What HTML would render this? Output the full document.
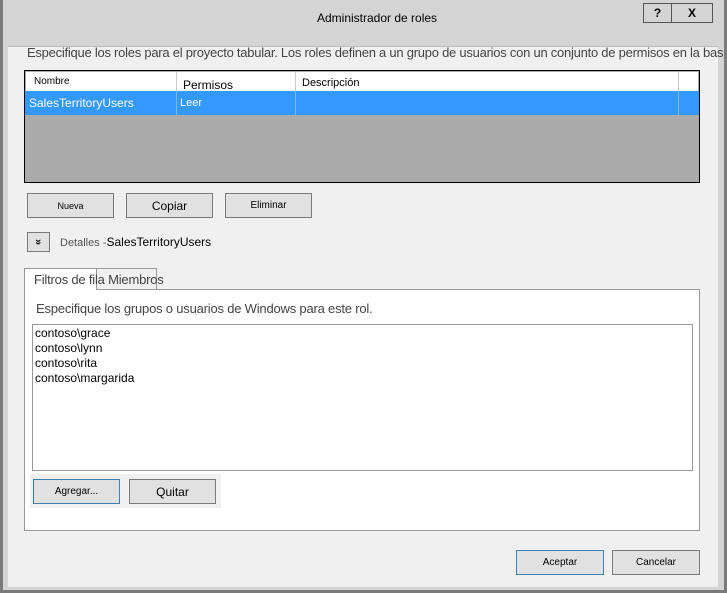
<!DOCTYPE html>
<html><head><meta charset="utf-8"><style>
*{margin:0;padding:0;box-sizing:border-box}
body{width:727px;height:593px;background:#7a7a7a;position:relative;overflow:hidden;font-family:"Liberation Sans",sans-serif;color:#000}
.a{position:absolute}
.btn{position:absolute;background:#e1e1e1;border:1px solid #7a7a7a;font-size:10px;text-align:center;display:flex;align-items:center;justify-content:center}
.t{position:absolute;white-space:nowrap}
</style></head><body>
<div class="a" style="left:3px;top:0;width:721px;height:590px;background:#d4d4d4"></div>
<div class="a" style="left:8px;top:46px;width:710px;height:541px;background:#f0f0f0;border-top:1px solid #bbb"></div>
<div class="a" style="left:643px;top:3px;width:28px;height:20px;border:1px solid #555;border-right:none;font-size:12px;font-weight:bold;text-align:center;line-height:18px">?</div>
<div class="a" style="left:671px;top:3px;width:42px;height:20px;border:1px solid #555;font-size:12px;font-weight:bold;text-align:center;line-height:18px">X</div>
<div class="t" style="left:317px;top:11px;font-size:12px">Administrador de roles</div>
<div class="t" style="left:27px;top:45px;font-size:13px;color:#444;letter-spacing:-0.25px">Especifique los roles para el proyecto tabular. Los roles definen a un grupo de usuarios con un conjunto de permisos en la bas</div>
<div class="a" style="left:24px;top:70px;width:676px;height:113px;background:#ababab;border:1px solid #000"></div>
<div class="a" style="left:26px;top:72px;width:672px;height:19px;background:#fff"></div>
<div class="a" style="left:176px;top:72px;width:1px;height:43px;background:#ccc"></div>
<div class="a" style="left:295px;top:72px;width:1px;height:43px;background:#ccc"></div>
<div class="a" style="left:678px;top:72px;width:1px;height:43px;background:#ccc"></div>
<div class="t" style="left:34px;top:76px;font-size:10px">Nombre</div>
<div class="t" style="left:183px;top:78px;font-size:12px">Permisos</div>
<div class="t" style="left:302px;top:77px;font-size:11px">Descripción</div>
<div class="a" style="left:25px;top:91px;width:674px;height:24px;background:#3399ff"></div>
<div class="a" style="left:176px;top:91px;width:1px;height:24px;background:#7ab8f5"></div>
<div class="a" style="left:295px;top:91px;width:1px;height:24px;background:#7ab8f5"></div>
<div class="a" style="left:678px;top:91px;width:1px;height:24px;background:#7ab8f5"></div>
<div class="t" style="left:29px;top:96px;font-size:12px;color:#fff">SalesTerritoryUsers</div>
<div class="t" style="left:180px;top:97px;font-size:11px;color:#fff">Leer</div>
<div class="btn" style="left:27px;top:193px;width:87px;height:25px;font-size:9px">Nueva</div>
<div class="btn" style="left:126px;top:193px;width:87px;height:25px;font-size:12px">Copiar</div>
<div class="btn" style="left:225px;top:193px;width:87px;height:25px">Eliminar</div>
<div class="btn" style="left:27px;top:232px;width:23px;height:20px;font-size:11px;font-weight:bold"><span style="display:inline-block;transform:rotate(90deg)">»</span></div>
<div class="t" style="left:60px;top:235px;font-size:11px;color:#555">Detalles -<span style="color:#000;font-size:12px">SalesTerritoryUsers</span></div>
<div class="a" style="left:24px;top:289px;width:676px;height:242px;background:#fff;border:1px solid #999"></div>
<div class="a" style="left:24px;top:268px;width:73px;height:22px;background:#fff;border:1px solid #999;border-bottom:none"></div>
<div class="a" style="left:96px;top:268px;width:61px;height:21px;background:#f0f0f0;border:1px solid #999;border-bottom:none"></div>
<div class="t" style="left:34px;top:272px;font-size:13px;color:#444;letter-spacing:-0.2px">Filtros de fila Miembros</div>
<div class="t" style="left:36px;top:301px;font-size:13px;color:#444;letter-spacing:-0.2px">Especifique los grupos o usuarios de Windows para este rol.</div>
<div class="a" style="left:32px;top:324px;width:661px;height:147px;border:1px solid #999"></div>
<div class="t" style="left:35px;top:326px;font-size:12px;line-height:15px">contoso\grace<br>contoso\lynn<br>contoso\rita<br>contoso\margarida</div>
<div class="a" style="left:30px;top:474px;width:191px;height:34px;background:#f0f0f0"></div>
<div class="btn" style="left:33px;top:479px;width:87px;height:25px;border-color:#3c7fb1">Agregar...</div>
<div class="btn" style="left:129px;top:479px;width:87px;height:25px;font-size:12px">Quitar</div>
<div class="btn" style="left:516px;top:550px;width:88px;height:25px;border-color:#3c7fb1">Aceptar</div>
<div class="btn" style="left:612px;top:550px;width:88px;height:25px">Cancelar</div>
</body></html>
